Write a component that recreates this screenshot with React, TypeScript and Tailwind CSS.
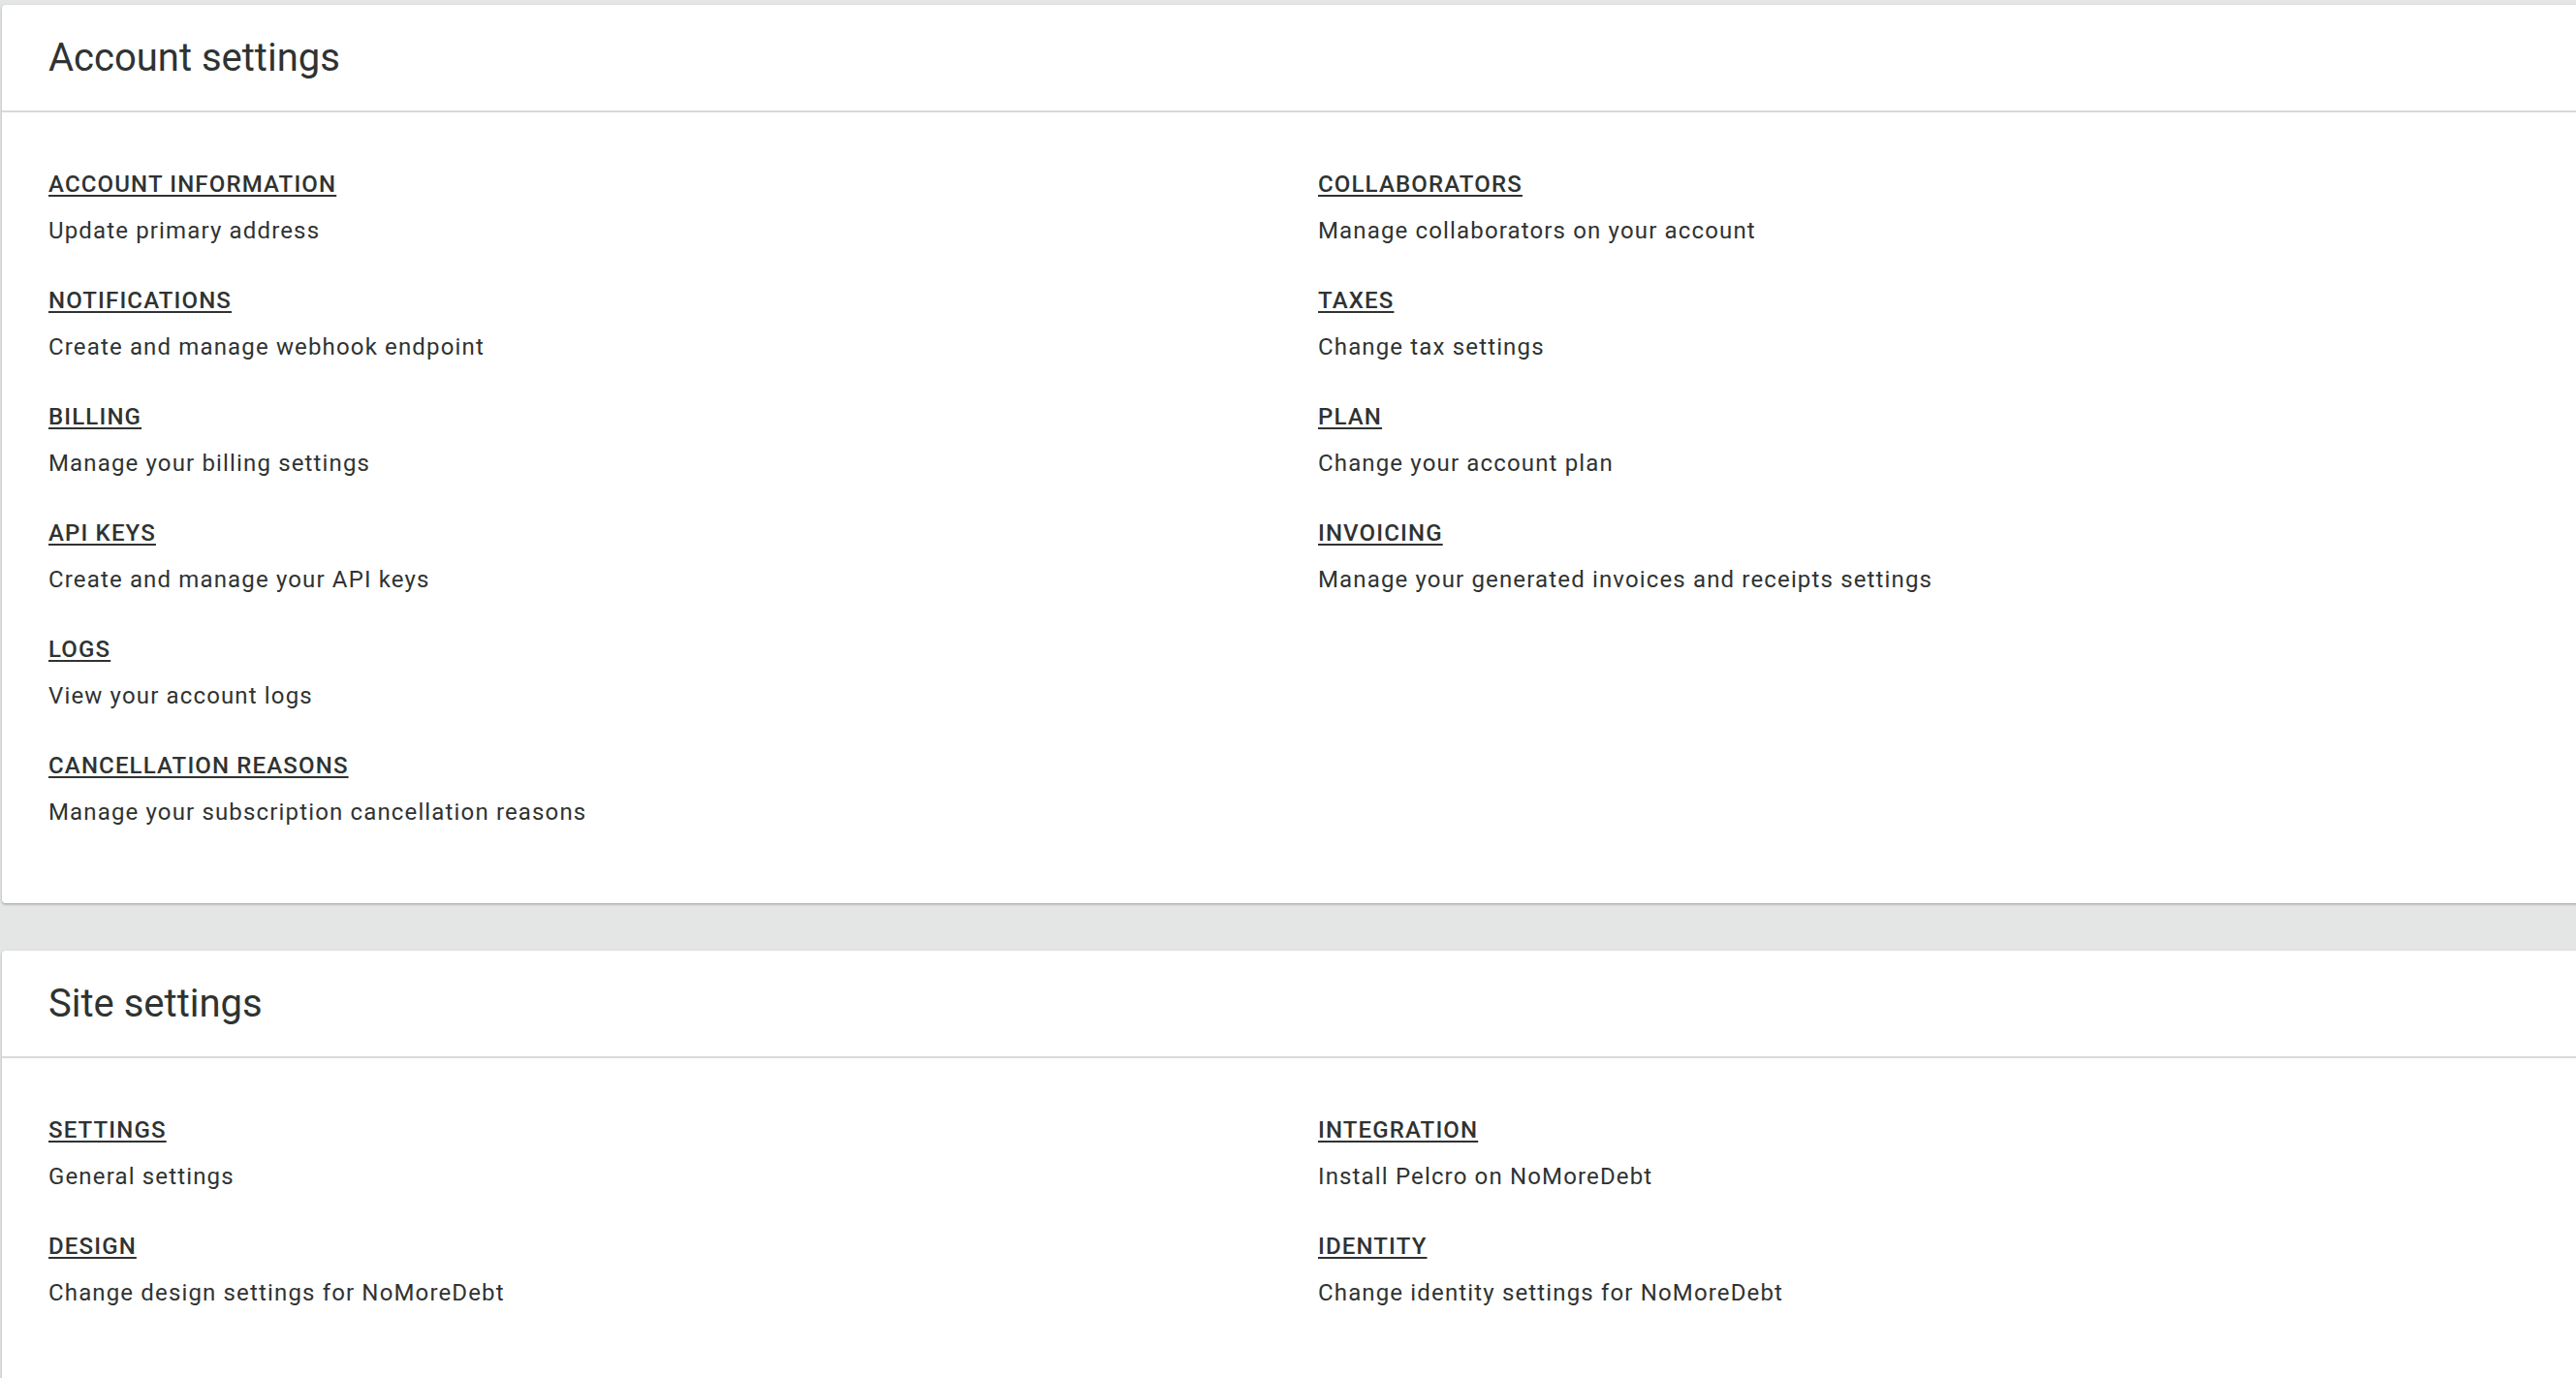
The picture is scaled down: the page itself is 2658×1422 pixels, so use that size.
const accountItems = [
  { title: "ACCOUNT INFORMATION", text: "Update primary address" },
  { title: "COLLABORATORS", text: "Manage collaborators on your account" },
  { title: "NOTIFICATIONS", text: "Create and manage webhook endpoint" },
  { title: "TAXES", text: "Change tax settings" },
  { title: "BILLING", text: "Manage your billing settings" },
  { title: "PLAN", text: "Change your account plan" },
  { title: "API KEYS", text: "Create and manage your API keys" },
  { title: "INVOICING", text: "Manage your generated invoices and receipts settings" },
  { title: "LOGS", text: "View your account logs" },
  null,
  { title: "CANCELLATION REASONS", text: "Manage your subscription cancellation reasons" },
]

const siteItems = [
  { title: "SETTINGS", text: "General settings" },
  { title: "INTEGRATION", text: "Install Pelcro on NoMoreDebt" },
  { title: "DESIGN", text: "Change design settings for NoMoreDebt" },
  { title: "IDENTITY", text: "Change identity settings for NoMoreDebt" },
]

type Item = { title: string; text: string } | null

function SettingsCard({ heading, items }: { heading: string; items: Item[] }) {
  return (
    <section className="w-[2716px] rounded-[4px] bg-white shadow-[0_1px_3px_rgba(0,0,0,0.22),0_2px_2px_rgba(0,0,0,0.08)]">
      <header className="flex h-[111px] items-center border-b-2 border-[#d8dad9] px-12">
        <h2 className="text-[40px] font-normal leading-[48px] text-[#2f3332]">{heading}</h2>
      </header>
      <div className="grid grid-cols-2 gap-y-10 px-12 pt-[58px] pb-[78px]">
        {items.map((item, i) =>
          item ? (
            <div key={i} className="flex flex-col">
              <a
                href="#"
                className="self-start text-[24px] font-medium leading-[32px] tracking-[1.15px] text-[#2f3332] underline decoration-2 underline-offset-[3px]"
              >
                {item.title}
              </a>
              <p className="mt-4 text-[24px] leading-[32px] tracking-[1.15px] text-[#2f3332]">{item.text}</p>
            </div>
          ) : (
            <div key={i} />
          )
        )}
      </div>
    </section>
  )
}

export default function App() {
  return (
    <div
      className="flex h-screen flex-col gap-[49px] overflow-hidden bg-[#e4e6e5] pt-[5px] pl-[2px]"
      style={{ fontFamily: "Roboto, 'Noto Sans', sans-serif" }}
    >
      <SettingsCard heading="Account settings" items={accountItems} />
      <SettingsCard heading="Site settings" items={siteItems} />
    </div>
  )
}
